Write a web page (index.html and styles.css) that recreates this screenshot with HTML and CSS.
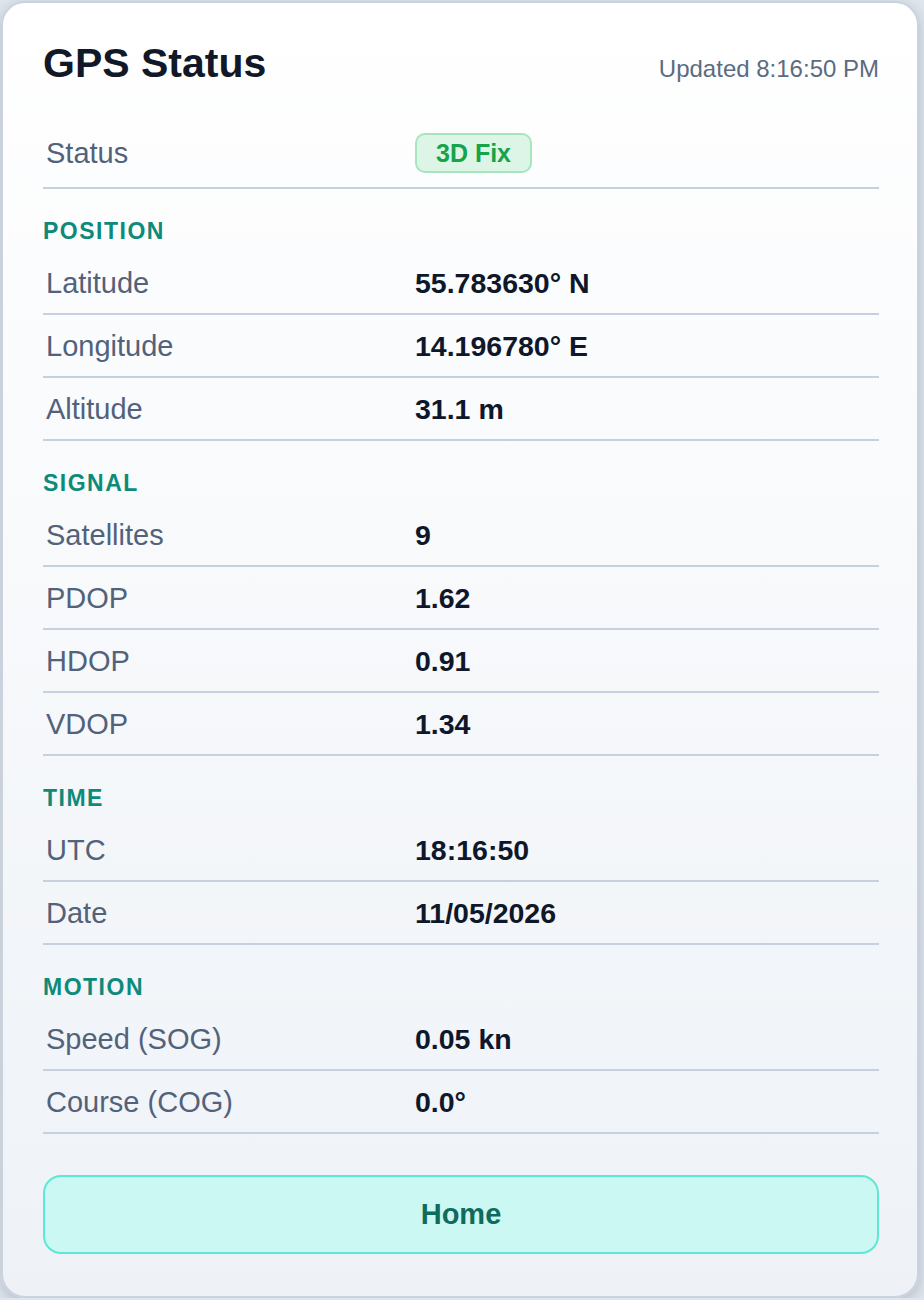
FILE: index.html
```html
<!DOCTYPE html>
<html lang="en">
<head>
  <meta charset="UTF-8">
  <meta name="viewport" content="width=device-width, initial-scale=1.0">
  <title>GPS Status</title>
  <link rel="stylesheet" href="styles.css">
</head>
<body>
  <div class="card">
    <div class="card-header">
      <h1>GPS Status</h1>
      <span class="updated">Updated 8:16:50 PM</span>
    </div>

    <div class="row status-row">
      <span class="label">Status</span>
      <span class="value"><span class="badge">3D Fix</span></span>
    </div>

    <h2 class="section-title">Position</h2>
    <div class="row">
      <span class="label">Latitude</span>
      <span class="value">55.783630° N</span>
    </div>
    <div class="row">
      <span class="label">Longitude</span>
      <span class="value">14.196780° E</span>
    </div>
    <div class="row">
      <span class="label">Altitude</span>
      <span class="value">31.1 m</span>
    </div>

    <h2 class="section-title">Signal</h2>
    <div class="row">
      <span class="label">Satellites</span>
      <span class="value">9</span>
    </div>
    <div class="row">
      <span class="label">PDOP</span>
      <span class="value">1.62</span>
    </div>
    <div class="row">
      <span class="label">HDOP</span>
      <span class="value">0.91</span>
    </div>
    <div class="row">
      <span class="label">VDOP</span>
      <span class="value">1.34</span>
    </div>

    <h2 class="section-title">Time</h2>
    <div class="row">
      <span class="label">UTC</span>
      <span class="value">18:16:50</span>
    </div>
    <div class="row">
      <span class="label">Date</span>
      <span class="value">11/05/2026</span>
    </div>

    <h2 class="section-title">Motion</h2>
    <div class="row">
      <span class="label">Speed (SOG)</span>
      <span class="value">0.05 kn</span>
    </div>
    <div class="row">
      <span class="label">Course (COG)</span>
      <span class="value">0.0°</span>
    </div>

    <button class="home-btn">Home</button>
  </div>
</body>
</html>
```

FILE: styles.css
```css
/* General Styles */
body {
  font-family: "Liberation Sans", Arial, Helvetica, sans-serif;
  background-color: #dfe5ec;
  color: #0f172a;
  margin: 0;
  padding: 0;
}

.card {
  box-sizing: border-box;
  width: 918px;
  margin: 1px 0 0 1px;
  padding: 40px 38px 42px 40px;
  border: 2px solid #c9d3e0;
  border-radius: 24px;
  background: linear-gradient(180deg, #ffffff 0%, #eef2f7 100%);
  box-shadow: 0 4px 14px rgba(15, 23, 42, 0.2);
}

/* Header */
.card-header {
  display: flex;
  justify-content: space-between;
  align-items: baseline;
  margin-bottom: 36px;
}

h1 {
  margin: 0;
  font-size: 41px;
  line-height: 41px;
  font-weight: bold;
  color: #111827;
}

.updated {
  font-size: 24px;
  color: #5b6b82;
}

/* Rows */
.row {
  display: grid;
  grid-template-columns: 372px 1fr;
  align-items: center;
  padding: 15px 0 13px;
  border-bottom: 2px solid #c6d0de;
  font-size: 29px;
  line-height: 33px;
}

.status-row {
  padding: 13px 0 14px;
}

.label {
  padding-left: 3px;
  color: #52627a;
}

.value {
  font-size: 28.5px;
  font-weight: bold;
  color: #0f172a;
}

.badge {
  display: inline-block;
  padding: 4px 19px;
  border: 2px solid #a6e6bf;
  border-radius: 10px;
  background-color: #dcf5e6;
  color: #16a34a;
  font-size: 25px;
  line-height: 28px;
  vertical-align: middle;
}

.section-title {
  margin: 30px 0 9px;
  font-size: 23px;
  line-height: 24px;
  font-weight: bold;
  letter-spacing: 1.5px;
  text-transform: uppercase;
  color: #0e8a7b;
}

/* Button */
.home-btn {
  display: block;
  width: 100%;
  height: 79px;
  margin-top: 41px;
  border: 2px solid #5ee8d4;
  border-radius: 18px;
  background-color: #ccf8f3;
  color: #0f6b5c;
  font-family: inherit;
  font-size: 29px;
  font-weight: bold;
  cursor: pointer;
  transition: background-color 0.3s ease;
}

.home-btn:hover {
  background-color: #b5f2ea;
}
```
